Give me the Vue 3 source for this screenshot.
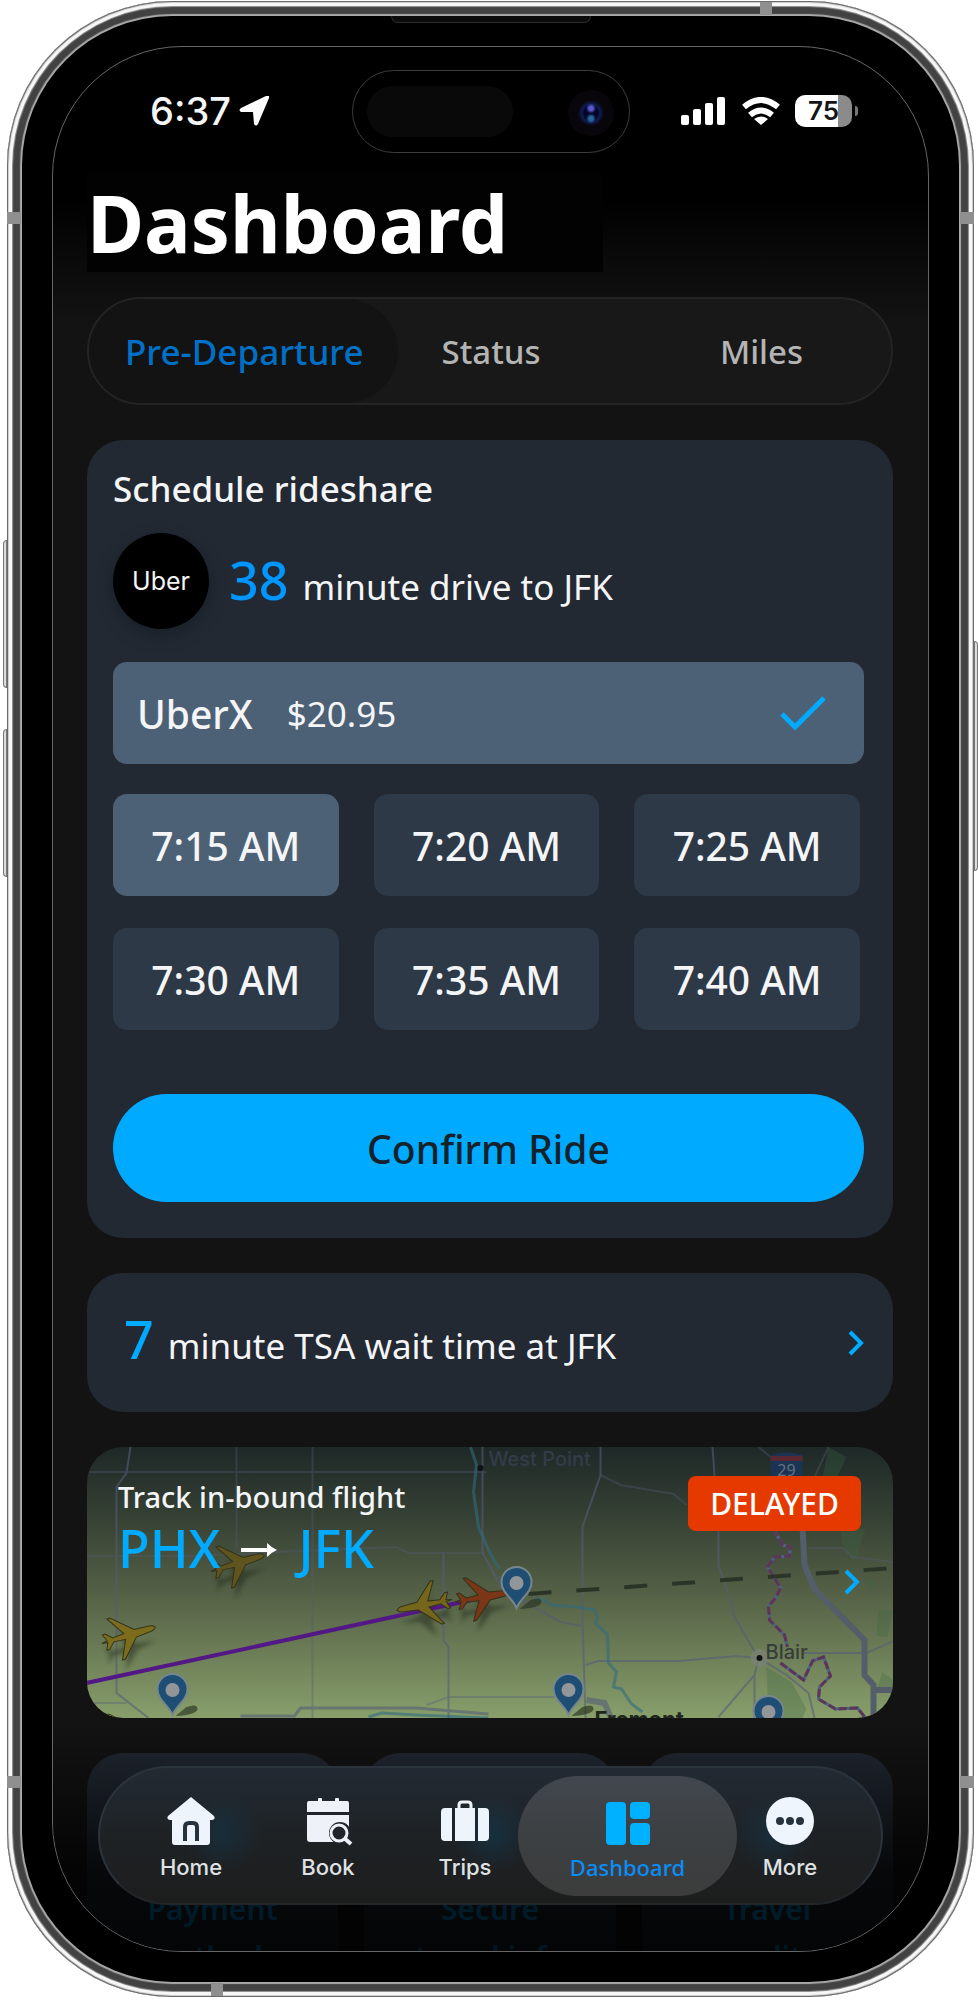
<script setup>
import { ref } from 'vue'

const tabs = ['Pre-Departure', 'Status', 'Miles']
const slots = ['7:15 AM', '7:20 AM', '7:25 AM', '7:30 AM', '7:35 AM', '7:40 AM']
const shortcuts = [
  ['Payment', 'methods'],
  ['Secure', 'travel info'],
  ['Travel', 'credits']
]
const navItems = ['Home', 'Book', 'Trips', 'Dashboard', 'More']

const planes = [
  { x: 43, y: 188, angle: -17, color: '#7d6c1c' },
  { x: 152, y: 116, angle: -17, color: '#5f541d' },
  { x: 337, y: 158, angle: 169, color: '#75661c' },
  { x: 397, y: 150, angle: -10, color: '#7b3517' },
  { x: 42, y: 284, angle: -17, color: '#a38d18' }
]
const pins = [
  { x: 86, y: 268 },
  { x: 430, y: 161 },
  { x: 482, y: 268 },
  { x: 682, y: 290 }
]

const activeTab = ref('Pre-Departure')
const activeSlot = ref('7:15 AM')
const activeNav = ref('Dashboard')
</script>

<template>
  <div class="phone">
    <span class="side-key volume-up"></span>
    <span class="side-key volume-down"></span>
    <span class="side-key power"></span>
    <span class="band band-left-top"></span>
    <span class="band band-right-top"></span>
    <span class="band band-left-bottom"></span>
    <span class="band band-right-bottom"></span>
    <span class="band band-top"></span>
    <span class="band band-bottom"></span>

    <div class="bezel">
      <span class="speaker"></span>

      <div class="screen">
        <!-- Status bar -->
        <header class="status-bar">
          <span class="clock">6:37</span>
          <svg class="location" viewBox="0 0 30 30" aria-hidden="true">
            <path d="M30 2 L19 28 Q17 31 15 28 L14 16 L2 16 Q-1 14 2 12 L27 0 Q31 -1 30 2Z" fill="#fff" />
          </svg>
          <svg class="signal" viewBox="0 0 46 28" aria-hidden="true">
            <g fill="#fff">
              <rect x="0" y="18" width="8" height="10" rx="2" />
              <rect x="12" y="12" width="8" height="16" rx="2" />
              <rect x="24" y="6" width="8" height="22" rx="2" />
              <rect x="36" y="0" width="8" height="28" rx="2" />
            </g>
          </svg>
          <svg class="wifi" viewBox="0 0 38 28" aria-hidden="true">
            <g fill="none" stroke="#fff" stroke-width="6">
              <path d="M2 10 Q19 -4 36 10" />
              <path d="M8 18 Q19 9 30 18" />
            </g>
            <path d="M19 28 L12 22 Q19 17 26 22Z" fill="#fff" />
          </svg>
          <span class="battery">75</span>
        </header>
        <div class="island">
          <span class="sensor"></span>
          <span class="camera"></span>
        </div>

        <main class="content">
          <h1>Dashboard</h1>

          <div class="tabs" role="tablist">
            <button
              v-for="tab in tabs"
              :key="tab"
              type="button"
              role="tab"
              :aria-selected="tab === activeTab"
              :class="{ active: tab === activeTab }"
              @click="activeTab = tab"
            >
              {{ tab }}
            </button>
          </div>

          <!-- Rideshare -->
          <section class="card ride">
            <h2>Schedule rideshare</h2>
            <div class="drive">
              <span class="uber-logo">Uber</span>
              <p><strong>38</strong>minute drive to JFK</p>
            </div>
            <button type="button" class="ride-option">
              <span class="ride-name">UberX</span>
              <span class="ride-price">$20.95</span>
              <svg viewBox="0 0 46 36" aria-hidden="true">
                <path d="M2 19 L15 32 L44 3" fill="none" stroke="#00abff" stroke-width="5" />
              </svg>
            </button>
            <div class="slots">
              <button
                v-for="slot in slots"
                :key="slot"
                type="button"
                :aria-pressed="slot === activeSlot"
                :class="{ active: slot === activeSlot }"
                @click="activeSlot = slot"
              >
                {{ slot }}
              </button>
            </div>
            <button type="button" class="confirm">Confirm Ride</button>
          </section>

          <!-- TSA wait -->
          <a href="#tsa" class="card tsa">
            <p><strong>7</strong>minute TSA wait time at JFK</p>
            <svg class="chevron" viewBox="0 0 18 28" aria-hidden="true">
              <path d="M3 3 L14 14 L3 25" />
            </svg>
          </a>

          <!-- Inbound flight -->
          <a href="#track" class="flight">
            <svg class="map" viewBox="0 0 807 271" preserveAspectRatio="xMidYMid slice" aria-hidden="true">
              <defs>
                <linearGradient id="land" x1="0" y1="0" x2="0" y2="1">
                  <stop offset="0" stop-color="#1e2827" />
                  <stop offset="0.25" stop-color="#354034" />
                  <stop offset="0.5" stop-color="#505c43" />
                  <stop offset="0.75" stop-color="#6b7c56" />
                  <stop offset="1" stop-color="#889f6b" />
                </linearGradient>
                <filter id="soft" x="-50%" y="-50%" width="200%" height="200%">
                  <feGaussianBlur stdDeviation="2" />
                </filter>
              </defs>
              <rect width="807" height="271" fill="url(#land)" />

              <g fill="#3d6844" opacity="0.3">
                <path d="M742 0 L760 10 L748 36 L736 30Z" />
                <path d="M754 82 L779 82 L768 116 L756 98Z" />
                <path d="M779 130 L789 135 L783 145Z" />
                <path d="M792 163 L806 164 L801 190 L790 189Z" />
                <path d="M680 220 L705 235 L720 262 L716 271 L690 271 L681 248Z" />
                <path d="M796 225 L807 233 L807 244 L790 243Z" />
              </g>

              <g fill="none" stroke="#565d78" stroke-width="2" opacity="0.6">
                <g opacity="0.6">
                  <path d="M0 25 H400 M0 109 H100 L310 100 L322 106 H398" />
                  <path d="M150 0 V101 M226 0 V271" />
                  <path d="M0 256 H40 M340 258 L362 250 H470" />
                  <path d="M514 28 L534 38 L587 47 L600 58" />
                  <path d="M722 101 H756 L766 110 L807 115 M742 0 L728 30 M672 0 L684 10" />
                </g>
                <path d="M44 0 L40 26 L30 40 V246 L62 271" />
                <path d="M357 106 V193 L362 200 V271" />
                <path d="M396 0 V106 L416 142 L448 160 L474 175 L496 179" />
                <path d="M514 0 V28 L496 80 V172 L499 271" />
                <path d="M626 0 L632 84 V118 L646 160 L648 170 L670 208" />
                <path d="M499 218 L512 214 L592 214 L650 209 L672 211 L700 228 L722 246 L728 271" />
                <path d="M672 211 L668 228 L632 270 M668 228 V271 M716 206 H780 L807 194" />
                <path d="M154 269 H208 L214 261 H330 L402 267" stroke-width="3" />
                <path d="M500 253 L518 256 L524 270" stroke-width="6" />
              </g>
              <path
                d="M716 80 L718 118 L728 142 L778 193 V228 L787 238 V271 M787 243 H807"
                fill="none" stroke="#545e6a" stroke-width="6"
              />
              <g fill="none" stroke="#2f6c80" stroke-width="3" opacity="0.6">
                <path d="M384 0 L390 18 L387 45 L392 80 L404 107 L413 122" />
                <path d="M447 152 L458 153 L464 158 L490 160 L508 163 L511 170 L509 176 L521 188 L522 216 L530 225 L527 240 L535 242 L545 257 L556 265" />
                <path d="M282 270 L295 266 L330 268 L402 271" />
              </g>
              <path
                d="M687 82 L696 98 L704 100 L703 109 L688 110 L681 120 L694 141 L689 151 L682 159 L683 173 L698 188 L701 200 M694 216 L717 233 L726 214 L737 210 L744 229 L733 240 L732 252 L749 262 L771 261 L779 271"
                fill="none" stroke="#4d6280" stroke-width="3" stroke-linejoin="round"
              />
              <path
                d="M687 82 L696 98 L704 100 L703 109 L688 110 L681 120 L694 141 L689 151 L682 159 L683 173 L698 188 L701 200 M694 216 L717 233 L726 214 L737 210 L744 229 L733 240 L732 252 L749 262 L771 261 L779 271"
                fill="none" stroke="#5d3557" stroke-width="3" stroke-dasharray="8 3"
              />

              <g>
                <path d="M684 15 V8 Q700 3 716 8 V40 H684Z" fill="#1b3454" />
                <rect x="684" y="9" width="32" height="5" fill="#5a2830" />
                <text x="700" y="29" text-anchor="middle" font-size="16" fill="#66727f">29</text>
              </g>

              <circle cx="394" cy="21" r="3" fill="#0f1314" />
              <circle cx="673" cy="211" r="9" fill="#7c8378" opacity="0.7" />
              <circle cx="673" cy="211" r="3" fill="#111" />
              <text x="402" y="19" font-size="20" fill="#333c48" class="place">West Point</text>
              <text x="679" y="212" font-size="20" fill="#363d3a" class="place">Blair</text>
              <text x="508" y="280" font-size="22" fill="#20261d" class="place bold">Fremont</text>

              <path d="M0 236 L385 153" stroke="#531886" stroke-width="4" />
              <path d="M442 147 L807 121" stroke="#2b3427" stroke-width="4" stroke-dasharray="23 25" />

              <g v-for="(plane, i) in planes" :key="i" :transform="`translate(${plane.x} ${plane.y})`">
                <path
                  :transform="`translate(2 13) rotate(${plane.angle})`"
                  d="M26 0 L6 -3 L-8 -20 L-5 -3 L-18 -2 L-26 -8 L-23 0 L-27 8 L-18 2 L-5 3 L-12 20 L6 3Z"
                  fill="#1b2417" opacity="0.45" filter="url(#soft)"
                />
                <path
                  :transform="`rotate(${plane.angle})`"
                  d="M27 0 Q25 -3 19 -3 L6 -4 L-14 -22 L-17 -22 L-5 -3 L-17 -2 L-23 -8 L-26 -8 L-23 -1 L-29 0 L-23 1 L-26 8 L-23 8 L-17 2 L-5 3 L-14 22 L-11 22 L6 4 L19 3 Q25 3 27 0Z"
                  :fill="plane.color" stroke="#33331a" stroke-width="1"
                />
              </g>

              <g v-for="(pin, i) in pins" :key="'pin' + i" :transform="`translate(${pin.x} ${pin.y})`">
                <path d="M3 1 L14 -8 Q25 -12 25 -6 Q24 0 3 1Z" fill="#28331f" opacity="0.65" />
                <path
                  d="M0 0 C-4 -10 -15 -15 -15 -26 A15 15 0 1 1 15 -26 C15 -15 4 -10 0 0Z"
                  fill="#1f4e74" stroke="#77868d" stroke-width="2"
                />
                <circle cy="-25" r="7" fill="#929699" />
              </g>
            </svg>

            <div class="flight-info">
              <div>
                <p class="flight-label">Track in-bound flight</p>
                <p class="route">
                  <span>PHX</span>
                  <svg viewBox="0 0 36 14" aria-hidden="true">
                    <path d="M0 5 H26 V0 Q31 5 36 7 Q31 9 26 14 V9 H0Z" fill="#fff" />
                  </svg>
                  <span>JFK</span>
                </p>
              </div>
              <div class="flight-side">
                <span class="badge">DELAYED</span>
                <svg class="chevron" viewBox="0 0 18 28" aria-hidden="true">
                  <path d="M3 3 L14 14 L3 25" />
                </svg>
              </div>
            </div>
          </a>

          <!-- Shortcuts under the nav bar -->
          <div class="shortcuts">
            <a v-for="item in shortcuts" :key="item[0]" href="#shortcut">
              {{ item[0] }}<br />{{ item[1] }}
            </a>
          </div>
        </main>

        <div class="fade"></div>

        <nav class="nav">
          <a
            v-for="item in navItems"
            :key="item"
            href="#nav"
            :class="{ active: item === activeNav }"
            @click.prevent="activeNav = item"
          >
            <svg v-if="item === 'Home'" viewBox="0 0 50 50" aria-hidden="true">
              <path
                d="M25 1 L48 20 Q50 23 46 24 H44 V46 Q44 49 41 49 H9 Q6 49 6 46 V24 H4 Q0 23 2 20Z"
                fill="#eef4fb"
              />
              <path d="M19 45 V31 Q19 27 23 27 H27 Q31 27 31 31 V45" fill="none" stroke="#26323d" stroke-width="4" />
            </svg>
            <svg v-else-if="item === 'Book'" viewBox="0 0 50 50" aria-hidden="true">
              <g fill="#eef1f7">
                <rect x="15" y="2" width="4" height="8" rx="1" />
                <rect x="32" y="2" width="4" height="8" rx="1" />
                <path d="M6 5 H44 Q46 5 46 7 V16 H4 V7 Q4 5 6 5Z" />
                <path d="M4 19 H46 V46 H7 Q4 46 4 43Z" />
              </g>
              <circle cx="37" cy="37" r="11" fill="#20252b" />
              <circle cx="36" cy="37" r="8" fill="none" stroke="#eef1f7" stroke-width="3" />
              <path d="M41 42 L48 48" stroke="#eef1f7" stroke-width="4" />
            </svg>
            <svg v-else-if="item === 'Trips'" viewBox="0 0 50 50" aria-hidden="true">
              <path d="M19 13 V9 Q19 6 22 6 H28 Q31 6 31 9 V13" fill="none" stroke="#eef1f7" stroke-width="3" />
              <g fill="#eef4fb">
                <path d="M12 12 V45 H5 Q1 45 1 41 V16 Q1 12 5 12Z" />
                <rect x="15" y="12" width="20" height="33" />
                <path d="M38 12 V45 H45 Q49 45 49 41 V16 Q49 12 45 12Z" />
              </g>
            </svg>
            <svg v-else-if="item === 'Dashboard'" viewBox="0 0 50 50" aria-hidden="true">
              <g fill="#00b1ff">
                <rect x="3" y="6" width="20" height="43" rx="4" />
                <rect x="27" y="6" width="20" height="17" rx="4" />
                <rect x="27" y="27" width="20" height="22" rx="4" />
              </g>
            </svg>
            <svg v-else viewBox="0 0 50 50" aria-hidden="true">
              <circle cx="25" cy="25" r="24" fill="#eef5fc" />
              <g fill="#26323d">
                <circle cx="15" cy="25" r="4" />
                <circle cx="25" cy="25" r="4" />
                <circle cx="35" cy="25" r="4" />
              </g>
            </svg>
            <span>{{ item }}</span>
          </a>
        </nav>
      </div>
    </div>
  </div>
</template>

<style>
body {
  background: #fff;
}
</style>

<style scoped>
* {
  box-sizing: border-box;
}

h1,
h2,
p {
  margin: 0;
}

button {
  border: 0;
  padding: 0;
  font: inherit;
  color: inherit;
  cursor: pointer;
}

a {
  color: inherit;
  text-decoration: none;
}

svg {
  display: block;
  flex: none;
}

/* Device */
.phone {
  position: relative;
  margin: 1px 4px 3px 7px;
  padding: 15px;
  border-radius: 165px;
  background: #aaa;
  box-shadow:
    inset 0 0 0 1px #6a6a6a,
    inset 0 0 0 2px #cfcfcf,
    inset 0 0 0 5px #f7f7f7,
    inset 0 0 1px 6px #999,
    inset 0 0 1px 13px #424242;
  font-family: "Noto Sans", "Open Sans", sans-serif;
  color: #f4f5f7;
}

.side-key {
  position: absolute;
  width: 4px;
  border: 1px solid #777;
  background: #ddd;
}

.volume-up,
.volume-down {
  left: -4px;
  height: 148px;
  border-radius: 4px 0 0 4px;
}

.volume-up {
  top: 539px;
}

.volume-down {
  top: 728px;
}

.power {
  right: -4px;
  top: 640px;
  height: 230px;
  border-radius: 0 4px 4px 0;
}

.band {
  position: absolute;
  width: 14px;
  height: 12px;
  background: #8f8f8f;
}

.band-left-top,
.band-right-top {
  top: 211px;
}

.band-left-bottom,
.band-right-bottom {
  bottom: 209px;
}

.band-left-top,
.band-left-bottom {
  left: 0;
}

.band-right-top,
.band-right-bottom {
  right: 0;
}

.band-top,
.band-bottom {
  width: 12px;
  height: 13px;
}

.band-top {
  top: 1px;
  right: 202px;
}

.band-bottom {
  bottom: 1px;
  left: 204px;
}

.bezel {
  position: relative;
  padding: 30px;
  border-radius: 150px;
  background: #000;
}

.speaker {
  position: absolute;
  top: 0;
  left: 50%;
  width: 200px;
  height: 7px;
  margin-left: -100px;
  border: 1px solid #2c2c2c;
  border-top: 0;
  border-radius: 0 0 8px 8px;
  background: #0b0b0b;
}

.screen {
  position: relative;
  overflow: hidden;
  border: 1px solid #666;
  border-radius: 130px;
  background: linear-gradient(#000 150px, #0b0b0b 220px, #131313 280px);
}

/* Status bar */
.status-bar {
  display: flex;
  align-items: center;
  height: 128px;
  padding: 0 76px 0 97px;
  font-family: Inter, "Liberation Sans", sans-serif;
}

.clock {
  font-size: 38px;
  font-weight: 500;
  line-height: 48px;
}

.location {
  width: 30px;
  height: 30px;
  margin-left: 8px;
}

.signal {
  width: 46px;
  height: 28px;
  margin-left: auto;
}

.wifi {
  width: 38px;
  height: 28px;
  margin: 0 15px;
}

.battery {
  position: relative;
  width: 57px;
  height: 32px;
  border-radius: 10px;
  background: linear-gradient(90deg, #fff 75%, #8b8b8b 75%);
  color: #151515;
  font-size: 26px;
  font-weight: 600;
  line-height: 32px;
  text-align: center;
}

.battery::after {
  content: "";
  position: absolute;
  top: 11px;
  right: -6px;
  width: 3px;
  height: 10px;
  border-radius: 0 4px 4px 0;
  background: #777;
}

.island {
  position: absolute;
  top: 23px;
  left: 50%;
  width: 278px;
  height: 83px;
  margin-left: -139px;
  border: 1px solid #3c3c3c;
  border-radius: 42px;
  background: #000;
}

.sensor {
  position: absolute;
  top: 15px;
  left: 14px;
  width: 146px;
  height: 51px;
  border-radius: 26px;
  background: #090909;
}

.camera {
  position: absolute;
  top: 19px;
  right: 15px;
  width: 46px;
  height: 46px;
  border-radius: 50%;
  background:
    radial-gradient(circle at 50% 40%, #5a5ad0 0 2px, transparent 5px),
    radial-gradient(circle at 50% 62%, #28689a 0 2px, transparent 5px),
    radial-gradient(circle at 50% 50%, #03062a 0 7px, #101c50 9px, #0b1133 11px, #08060b 13px);
}

/* Page */
.content {
  padding: 0 35px 0 34px;
}

h1 {
  width: 516px;
  max-width: 100%;
  background: #020202;
  color: #fff;
  font-size: 78px;
  font-weight: 700;
  line-height: 97px;
}

.tabs {
  display: flex;
  height: 108px;
  margin: 25px 0 35px;
  border: 2px solid #242424;
  border-radius: 54px;
  background: #181818;
  color: #b4b4b4;
  font-size: 33px;
  font-weight: 500;
}

.tabs button {
  padding: 0 44px;
  border-radius: 52px;
  background: none;
}

.tabs button:first-child {
  padding: 0 34px 0 36px;
}

.tabs button:last-child {
  margin-left: auto;
  padding-right: 88px;
}

.tabs .active {
  background: #131313;
  color: #0070c6;
  font-size: 35px;
}

.card {
  border-radius: 36px;
  background: #222933;
}

.ride {
  padding: 25px 29px 36px 26px;
}

h2 {
  font-size: 35px;
  font-weight: 500;
  line-height: 48px;
}

.drive {
  display: flex;
  align-items: center;
  gap: 20px;
  margin: 20px 0 33px;
}

.uber-logo {
  flex: none;
  width: 96px;
  height: 96px;
  border-radius: 50%;
  background: #000;
  box-shadow: 0 6px 18px rgba(0, 0, 0, 0.25);
  font-family: Inter, "Liberation Sans", sans-serif;
  font-size: 25px;
  line-height: 96px;
  text-align: center;
}

.drive p,
.tsa p {
  font-size: 35px;
  line-height: 72px;
}

.drive p {
  padding-top: 5px;
}

.drive strong,
.tsa strong {
  margin-right: 14px;
  color: #00abff;
  font-size: 52px;
  font-weight: 500;
}

.drive strong {
  color: #0096ff;
}

.ride-option {
  display: flex;
  align-items: center;
  width: 100%;
  height: 102px;
  padding: 0 38px 0 24px;
  border-radius: 14px;
  background: #4d6176;
}

.ride-name {
  font-size: 39px;
  font-weight: 500;
}

.ride-price {
  margin-left: 34px;
  font-size: 35px;
}

.ride-option svg {
  width: 46px;
  height: 36px;
  margin-left: auto;
}

.slots {
  display: grid;
  grid-template-columns: repeat(3, 1fr);
  gap: 32px 35px;
  margin: 30px 4px 64px 0;
}

.slots button {
  height: 102px;
  border-radius: 14px;
  background: #2d3946;
  font-size: 39px;
  font-weight: 500;
}

.slots .active {
  background: #4d6176;
}

.confirm {
  width: 100%;
  height: 108px;
  border-radius: 54px;
  background: #00abff;
  color: #16222b;
  font-size: 39px;
  font-weight: 500;
}

.tsa {
  display: flex;
  align-items: center;
  justify-content: space-between;
  height: 139px;
  margin: 35px 0;
  padding: 0 28px 0 37px;
}

.chevron {
  width: 18px;
  height: 28px;
  fill: none;
  stroke: #00abff;
  stroke-width: 4px;
}

/* Flight map */
.flight {
  position: relative;
  display: block;
  height: 271px;
  overflow: hidden;
  border-radius: 36px;
}

.map {
  position: absolute;
  inset: 0;
  width: 100%;
  height: 100%;
}

.place {
  font-family: Inter, "Liberation Sans", sans-serif;
  font-weight: 500;
}

.bold {
  font-weight: 700;
}

.flight-info {
  position: relative;
  display: flex;
  justify-content: space-between;
  padding: 29px 32px 0 31px;
}

.flight-label {
  font-size: 29px;
  font-weight: 500;
  line-height: 42px;
}

.route {
  display: flex;
  align-items: center;
  color: #00abff;
  font-size: 52px;
  font-weight: 500;
  line-height: 60px;
}

.route svg {
  width: 36px;
  height: 14px;
  margin: 4px 21px 0;
}

.flight-side {
  display: flex;
  flex-direction: column;
  align-items: flex-end;
  gap: 37px;
}

.badge {
  width: 173px;
  border-radius: 8px;
  background: #e63900;
  color: #fff;
  font-size: 30px;
  font-weight: 500;
  line-height: 55px;
  text-align: center;
}

.shortcuts {
  display: grid;
  grid-template-columns: repeat(3, 1fr);
  gap: 26px;
  height: 198px;
  margin-top: 35px;
  overflow: hidden;
}

.shortcuts a {
  padding-top: 132px;
  border-radius: 36px 36px 0 0;
  background: #222933;
  color: #00abff;
  font-size: 30px;
  font-weight: 600;
  line-height: 48px;
  text-align: center;
}

.fade {
  position: absolute;
  right: 0;
  bottom: 0;
  left: 0;
  height: 230px;
  background: linear-gradient(transparent, rgba(0, 0, 0, 0.8) 150px, rgba(0, 0, 0, 0.88));
}

/* Bottom nav */
.nav {
  position: absolute;
  right: 45px;
  bottom: 46px;
  left: 45px;
  display: flex;
  height: 139px;
  padding: 8px 38px;
  border: 2px solid #2b343d;
  border-bottom-color: #222629;
  border-radius: 70px;
  background:
    radial-gradient(circle at 122px 66px, rgba(0, 90, 140, 0.2), transparent 40px),
    radial-gradient(circle at 392px 66px, rgba(0, 90, 140, 0.25), transparent 40px),
    radial-gradient(circle at 672px 66px, rgba(0, 90, 140, 0.2), transparent 40px),
    linear-gradient(#222a33, #1e2225 50%, #1d1d1d);
  color: #dfe1e4;
  font-family: Inter, "Liberation Sans", sans-serif;
  font-size: 22px;
  font-weight: 500;
  line-height: 28px;
}

.nav a {
  display: flex;
  flex: 106 1 0;
  flex-direction: column;
  align-items: center;
  gap: 7px;
  height: 120px;
  padding-top: 20px;
  border-radius: 60px;
}

.nav a:nth-child(-n + 2) {
  margin-right: 31px;
}

.nav svg {
  width: 50px;
  height: 50px;
}

.nav .active {
  flex-grow: 219;
  background: linear-gradient(#42474f, #3c4042 50%, #3c3c3c);
  color: #0a8df5;
  font-family: "Noto Sans", sans-serif;
}
</style>
